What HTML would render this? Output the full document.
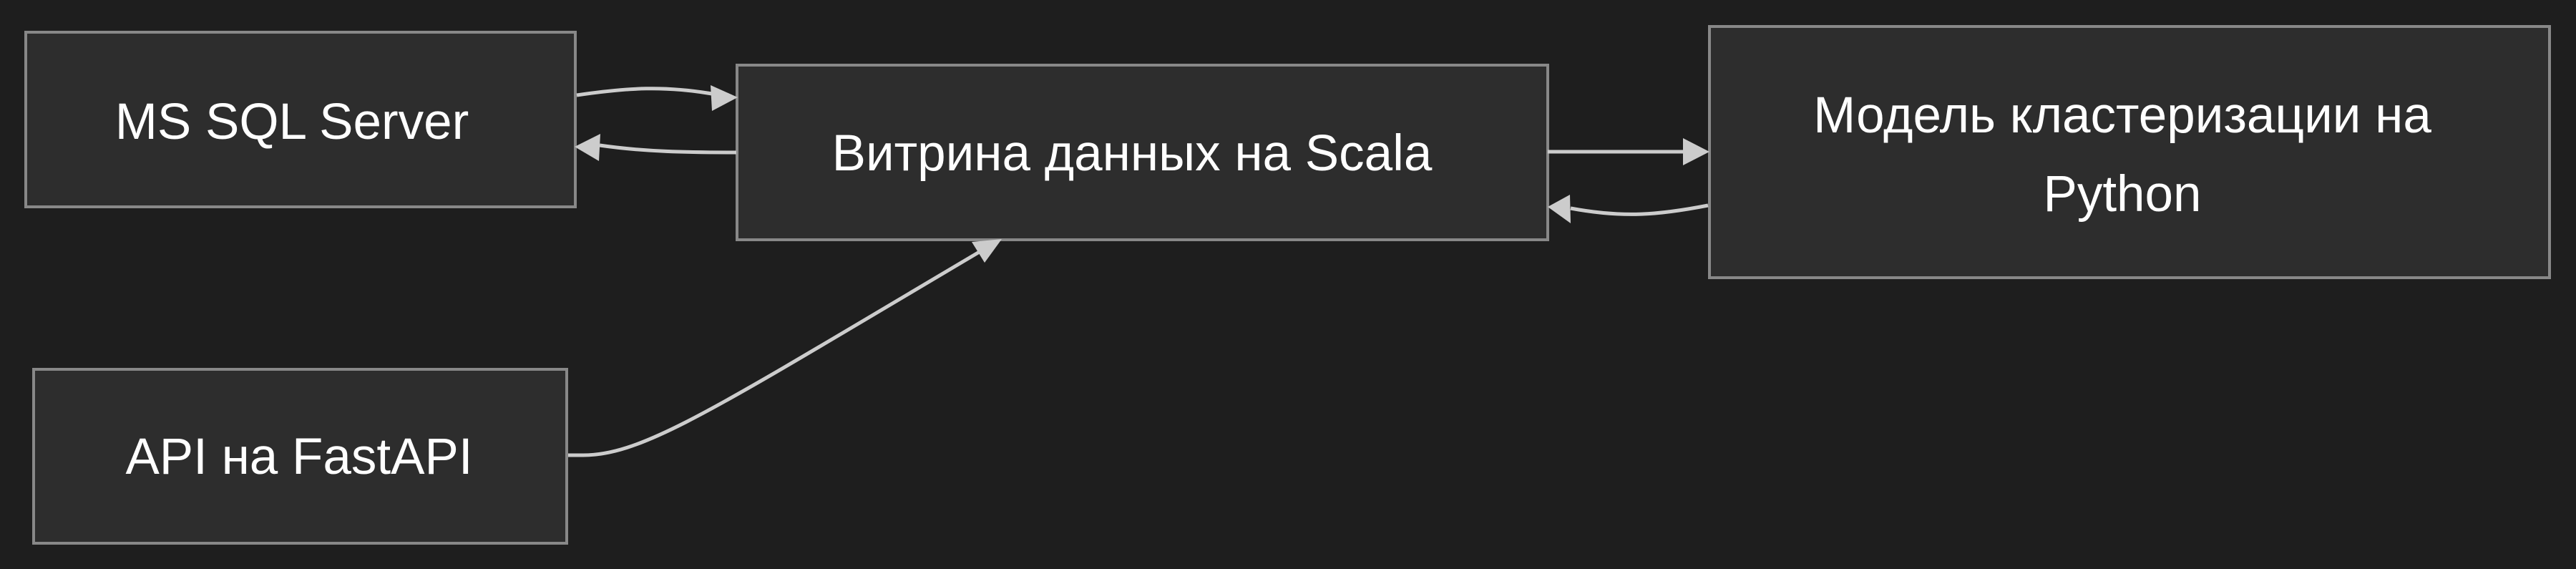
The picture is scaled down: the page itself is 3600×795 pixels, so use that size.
<!DOCTYPE html>
<html><head><meta charset="utf-8"><style>
html,body{margin:0;padding:0;background:#1e1e1e;}
svg{display:block;}
text{font-family:"Liberation Sans","DejaVu Sans",sans-serif;fill:#ffffff;font-size:71px;text-anchor:middle;}
</style></head><body>
<svg width="3600" height="795" viewBox="0 0 3600 795" xmlns="http://www.w3.org/2000/svg">
<rect width="3600" height="795" fill="#1e1e1e"/>
<g fill="#2d2d2d" stroke="#888" stroke-width="4">
<rect x="36" y="45" width="768" height="244"/>
<rect x="1030" y="91" width="1133" height="244"/>
<rect x="2389" y="37" width="1174" height="351"/>
<rect x="47" y="516" width="745" height="243"/>
</g>
<g fill="none" stroke="#cccccc" stroke-width="5">
<path d="M806,133 C880,122 930,120 995,131"/>
<path d="M1029,213 C960,213 900,212 838,203"/>
<path d="M2163,212 L2354,212"/>
<path d="M2387,287 C2320,300 2270,305 2195,291"/>
<path d="M794,636 L815,636 C900,636 1000,570 1372,350"/>
</g>
<g fill="#cccccc">
<polygon points="1031,136 993,119 995,155"/>
<polygon points="803,205 839,187 837,225"/>
<polygon points="2389,212 2352,193 2352,231"/>
<polygon points="2163,289 2194,272 2195,312"/>
<polygon points="1400,334 1358,338 1376,367"/>
</g>
<text x="408" y="194">MS SQL Server</text>
<text x="1582" y="238">Витрина данных на Scala</text>
<text x="2966" y="185">Модель кластеризации на</text>
<text x="2966" y="295">Python</text>
<text x="418" y="662">API на FastAPI</text>
</svg>
</body></html>
